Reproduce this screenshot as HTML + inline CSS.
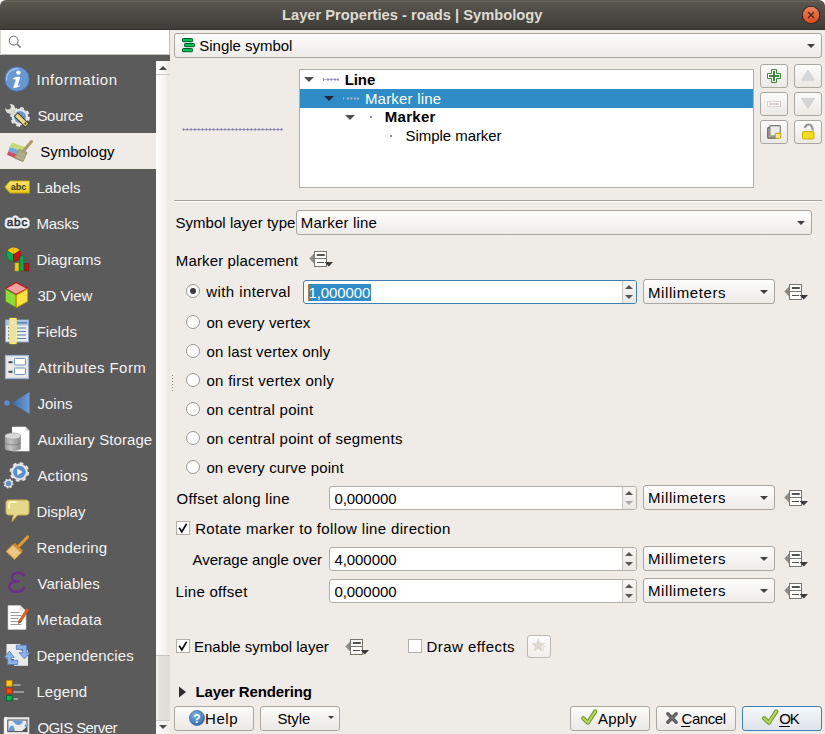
<!DOCTYPE html>
<html><head><meta charset="utf-8">
<style>
*{margin:0;padding:0;box-sizing:border-box}
html,body{width:825px;height:734px;overflow:hidden;background:#ffffff}
body{position:relative;font-family:"Liberation Sans",sans-serif;font-size:15px;color:#000}
.a{position:absolute}
.t{position:absolute;line-height:18px;white-space:nowrap;font-size:15px}
svg{position:absolute;overflow:visible}
#title{left:0;top:0;width:825px;height:30px;background:linear-gradient(#5b5850,#3d3c38);border-radius:6px 6px 0 0}
#bg{left:0;top:30px;width:825px;height:704px;background:#efebe7}
#search{left:0;top:30px;width:170px;height:25px;background:#fff;border-radius:2px 0 0 2px;border:1px solid #c4c0ba;border-top-color:#ffffff;border-left-color:#d6d3ce}
#side{left:0;top:55px;width:156px;height:679px;background:#5b5b5b}
#sidestrip{left:156px;top:55px;width:14px;height:6px;background:#5b5b5b}
#sel{left:0;top:133px;width:156px;height:36px;background:#efebe7}
.combo{position:absolute;border:1px solid #a9a59f;border-radius:3px;background:linear-gradient(#fdfdfd,#edebe8)}
.arr{position:absolute;width:0;height:0;border-left:4px solid transparent;border-right:4px solid transparent;border-top:4px solid #404040}
.spin{position:absolute;border:1px solid #b1ada7;border-radius:3px;background:#fff;overflow:hidden}
.spin .sb{position:absolute;right:0;top:0;bottom:0;width:14px;border-left:1px solid #c9c5c0;background:linear-gradient(#f7f6f4,#ebe8e4)}
.up{position:absolute;width:0;height:0;border-left:4px solid transparent;border-right:4px solid transparent;border-bottom:4px solid #555}
.dn{position:absolute;width:0;height:0;border-left:4px solid transparent;border-right:4px solid transparent;border-top:4px solid #555}
.tb{position:absolute;border:1px solid #aba7a1;border-radius:3px;background:linear-gradient(#fbfbfa,#ebe9e6)}
.radio{position:absolute;width:14px;height:14px;border-radius:50%;border:1px solid #9c9891;background:radial-gradient(circle at 50% 60%,#ffffff 55%,#f0efed)}
.chk{position:absolute;width:14px;height:14px;border:1px solid #b3afa9;background:#fff}
</style></head><body>
<div id="bg" class="a"></div>
<div id="title" class="a"></div>
<div class="a" style="left:4px;top:1px;width:817px;height:1px;background:#68655c"></div>
<div class="a" style="left:0;top:29px;width:825px;height:1px;background:#33322e"></div>
<svg style="left:801px;top:5px" width="20" height="20" viewBox="0 0 20 20">
 <defs><linearGradient id="cg" x1="0" y1="0" x2="0" y2="1"><stop offset="0" stop-color="#f0845a"/><stop offset="1" stop-color="#de4a18"/></linearGradient></defs>
 <circle cx="10" cy="10" r="9.3" fill="#2f2e2a"/>
 <circle cx="10" cy="10" r="8.2" fill="url(#cg)"/>
 <path d="M7 7L13 13M13 7L7 13" stroke="#3a2a20" stroke-width="1.3"/>
</svg>
<div id="search" class="a"></div>
<svg style="left:8px;top:35px" width="16" height="16" viewBox="0 0 16 16">
 <circle cx="5.7" cy="5.7" r="4.4" fill="none" stroke="#7b7b7b" stroke-width="1.1"/>
 <path d="M9 9L12.6 12.6" stroke="#7b7b7b" stroke-width="1.5"/>
</svg>
<div id="side" class="a"></div>
<div id="sidestrip" class="a"></div>
<!-- sidebar scrollbar -->
<div class="a" style="left:156px;top:61px;width:14px;height:594px;background:linear-gradient(90deg,#ffffff,#f6f5f3 60%,#eae7e3)"></div>
<div class="a" style="left:156px;top:74px;width:14px;height:1px;background:#cfcbc6"></div>
<div class="up" style="left:159px;top:66px;border-bottom-color:#4a4a4a"></div>
<div class="a" style="left:156px;top:655px;width:14px;height:65px;background:linear-gradient(90deg,#f3f1ee,#e2dfdb 30%,#e0ddd9)"></div>
<div class="a" style="left:156px;top:655px;width:14px;height:1px;background:#c9c5c0"></div>
<div class="a" style="left:156px;top:720px;width:14px;height:14px;background:linear-gradient(90deg,#ffffff,#f0eeeb)"></div>
<div class="a" style="left:156px;top:720px;width:14px;height:1px;background:#cfcbc6"></div>
<div class="dn" style="left:159px;top:725px;border-top-color:#4a4a4a"></div>
<div id="sel" class="a"></div>
<div class="a" style="left:172px;top:375px;width:1px;height:1px;background:#8a8885"></div><div class="a" style="left:172px;top:378px;width:1px;height:1px;background:#8a8885"></div><div class="a" style="left:172px;top:381px;width:1px;height:1px;background:#8a8885"></div><div class="a" style="left:172px;top:384px;width:1px;height:1px;background:#8a8885"></div><div class="a" style="left:172px;top:387px;width:1px;height:1px;background:#8a8885"></div><div class="a" style="left:172px;top:390px;width:1px;height:1px;background:#8a8885"></div>

<svg style="left:4px;top:66px" width="26" height="26" viewBox="0 0 26 26">
 <circle cx="13" cy="13" r="12.2" fill="#6898d3" stroke="#4470ac" stroke-width="0.8"/>
 <path d="M2.8 14.5A10.3 10.3 0 0 1 14.5 2.8" fill="none" stroke="#a9c7ee" stroke-width="1.1"/>
 <circle cx="14.4" cy="6.6" r="2.2" fill="#fff"/>
 <path d="M8.8 12.4C10.8 10.8 14.6 10.4 16.2 11C16.2 13 14.2 17 13.8 19.5C14.6 20 15.6 19.5 16.6 18.6C15.6 21 12.6 22.2 9.6 21.9C9.2 20.5 11.4 16 11.9 13.6C10.9 13.5 9.9 13.3 8.8 12.4Z" fill="#fff"/>
</svg>
<svg style="left:5px;top:102px" width="25" height="25" viewBox="0 0 25 25">
 <circle cx="15" cy="15" r="8.2" fill="#e8e8e8" stroke="#cfcfcf" stroke-width="0.5"/>
 <circle cx="15" cy="15" r="8.9" fill="none" stroke="#e8e8e8" stroke-width="2" stroke-dasharray="3.6 3.39"/>
 <circle cx="15" cy="15" r="6" fill="#6a9ad2"/>
 <circle cx="5.2" cy="6.8" r="4.9" fill="#e2e2dd"/>
 <circle cx="3" cy="4.6" r="2.9" fill="#5b5b5b"/>
 <path d="M7 8.6L11.5 13" stroke="#d6d6d0" stroke-width="3.6"/>
 <path d="M10.8 12.2L22.2 23.6" stroke="#35342a" stroke-width="5.8"/>
 <path d="M11.4 12.8L21.8 23.2" stroke="#eed77a" stroke-width="4"/>
 <circle cx="20.4" cy="21.6" r="1.1" fill="#3b3b30"/>
</svg>
<svg style="left:0px;top:133px" width="36" height="36" viewBox="0 0 36 36">
 <path d="M12 9.5L25 14L22.5 18.5L9.8 14Z" fill="#c3dc78"/>
 <path d="M9.8 14L22.5 18.5L20.5 22.5L8.2 18.2Z" fill="#6fa8dc"/>
 <path d="M8.2 18.2L20.5 22.5L21 28L7 21.8Z" fill="#d24f68"/>
 <path d="M19 16.5L27 19.5L23 28.5L14.5 25Z" fill="#aaa684" stroke="#948c5c" stroke-width="0.9"/>
 <path d="M16.5 20L25 23M15.5 23L23.5 26M21 17.5L18 26M24 18.5L21 27.5" stroke="#bdbaa0" stroke-width="0.5"/>
 <path d="M23.5 18L31.5 8.5" stroke="#a99b68" stroke-width="3" stroke-linecap="round"/>
</svg>
<svg style="left:4px;top:180px" width="26" height="14" viewBox="0 0 26 14">
 <defs><linearGradient id="lg" x1="0" y1="0" x2="0" y2="1"><stop offset="0" stop-color="#fbe870"/><stop offset="1" stop-color="#e9c80c"/></linearGradient></defs>
 <path d="M0.8 7L6 1H25.3V13H6Z" fill="url(#lg)" stroke="#c9a60a" stroke-width="0.9"/>
 <text x="6.8" y="10.2" font-family="Liberation Sans" font-weight="bold" font-size="9" fill="#3a3a2a">abc</text>
</svg>
<svg style="left:4px;top:213px" width="27" height="18" viewBox="0 0 27 18">
 <text x="2.7" y="12.7" font-family="Liberation Sans" font-size="11.6" letter-spacing="0.9" fill="none" stroke="#eef0f8" stroke-width="5" stroke-linejoin="round">abc</text>
 <text x="2.7" y="12.7" font-family="Liberation Sans" font-size="11.6" letter-spacing="0.9" fill="#2b2e33" stroke="#2b2e33" stroke-width="0.5">abc</text>
</svg>
<svg style="left:5px;top:246px" width="25" height="27" viewBox="0 0 25 27">
 <path d="M8.5 8.5L8.5 1.5A7 7 0 0 1 14.5 4.8Z" fill="#f7c900"/>
 <path d="M8.5 8.5L2.5 5A7 7 0 0 1 8.5 1.5Z" fill="#f7c900"/>
 <path d="M8.5 8.5L2.5 5A7 7 0 0 0 8.5 15.5Z" fill="#00b050" stroke="#0a6a30" stroke-width="0.6"/>
 <path d="M8.5 8.5L14.5 4.8A7 7 0 0 1 8.5 15.5Z" fill="#d01010" stroke="#7a1010" stroke-width="0.6"/>
 <rect x="10" y="17" width="3.8" height="8" fill="#f7c900" stroke="#c89a00" stroke-width="0.5"/>
 <rect x="15" y="10" width="3.8" height="15" fill="#00b050" stroke="#0a6a30" stroke-width="0.6"/>
 <rect x="19.8" y="17.5" width="4" height="7.5" fill="#cc1010" stroke="#7a1010" stroke-width="0.6"/>
</svg>
<svg style="left:4px;top:281px" width="26" height="28" viewBox="0 0 26 28">
 <path d="M12 1.5L23.5 7.5L12 13.5L1.5 7.5Z" fill="#f4a0a0" stroke="#c01818" stroke-width="1.2"/>
 <path d="M1.5 8L12 14V26.5L1.5 20.5Z" fill="#8ddc3a" stroke="#4e9a10" stroke-width="1"/>
 <path d="M23.5 8L12.5 14V26.5L23.5 20.5Z" fill="#ffe040" stroke="#c9a000" stroke-width="1"/>
</svg>
<svg style="left:5px;top:318px" width="25" height="27" viewBox="0 0 25 27">
 <rect x="0.5" y="2" width="23" height="22" fill="#e9edf2" stroke="#8aa6c8" stroke-width="1"/>
 <rect x="1" y="2.5" width="22" height="5" fill="#a8c2e2"/>
 <g fill="#5b82b6"><rect x="3" y="9" width="1.5" height="1.5"/><rect x="3" y="12.5" width="1.5" height="1.5"/><rect x="3" y="16" width="1.5" height="1.5"/><rect x="3" y="19.5" width="1.5" height="1.5"/>
 <rect x="12" y="4" width="10" height="1.5"/><rect x="12" y="9.5" width="9" height="1"/><rect x="12" y="13" width="9" height="1"/><rect x="12" y="16.5" width="9" height="1"/><rect x="12" y="20" width="9" height="1"/></g>
 <rect x="5" y="0.5" width="6" height="25" fill="#ece0b2" stroke="#f8f050" stroke-width="1.3"/>
 <rect x="7.2" y="4" width="1.5" height="1.5" fill="#fff"/>
</svg>
<svg style="left:5px;top:355px" width="25" height="24" viewBox="0 0 25 24">
 <rect x="0.5" y="0.5" width="23" height="23" fill="#e8e8e6" stroke="#9ab3d3" stroke-width="1.2"/>
 <rect x="3.5" y="6.2" width="4" height="2" fill="#3c4a58"/>
 <rect x="3.5" y="15.8" width="4" height="2" fill="#3c4a58"/>
 <rect x="9.5" y="3.5" width="11" height="6.5" rx="1" fill="#fff" stroke="#6f94c4" stroke-width="1"/>
 <rect x="9.5" y="13" width="11" height="6.5" rx="1" fill="#fff" stroke="#6f94c4" stroke-width="1"/>
</svg>
<svg style="left:3px;top:391px" width="27" height="24" viewBox="0 0 27 24">
 <defs><linearGradient id="jg" x1="0" y1="0" x2="1" y2="0"><stop offset="0" stop-color="#3a6aa6"/><stop offset="1" stop-color="#6f9cd6"/></linearGradient></defs>
 <circle cx="4" cy="12" r="2.8" fill="#5a8ac8"/>
 <path d="M9 12L26.5 1V23Z" fill="url(#jg)"/>
</svg>
<svg style="left:4px;top:426px" width="26" height="27" viewBox="0 0 26 27">
 <path d="M8 0.8H21.5L25.4 4.8V25.2H8Z" fill="#fff"/>
 <path d="M21.5 0.8V4.8H25.4Z" fill="#d5d5d5"/>
 <defs><linearGradient id="dbg" x1="0" y1="0" x2="1" y2="0"><stop offset="0" stop-color="#9a9a9a"/><stop offset="0.35" stop-color="#c2c2c2"/><stop offset="1" stop-color="#8a8a8a"/></linearGradient></defs>
 <path d="M0.8 10V22.5C0.8 25.8 16.8 25.8 16.8 22.5V10Z" fill="url(#dbg)"/>
 <ellipse cx="8.8" cy="10" rx="8" ry="3.1" fill="#d8d8d8" stroke="#8a8a8a" stroke-width="0.5"/>
 <path d="M0.8 16.5C0.8 19.6 16.8 19.6 16.8 16.5" fill="none" stroke="#7a7a7a" stroke-width="0.7"/>
</svg>
<svg style="left:3px;top:460px" width="28" height="30" viewBox="0 0 28 30">
 <circle cx="16.4" cy="12" r="8.3" fill="#e8e8e8" stroke="#c8c8c8" stroke-width="0.5"/>
 <circle cx="16.4" cy="12" r="8.9" fill="none" stroke="#e8e8e8" stroke-width="1.8" stroke-dasharray="3.6 3.39"/>
 <circle cx="16.4" cy="12" r="6" fill="#5e8fcc" stroke="#4a78b4" stroke-width="0.5"/>
 <path d="M14.4 8.8V15.2L19.6 12Z" fill="#fff"/>
 <circle cx="5.5" cy="23.5" r="4" fill="#e8e8e8"/>
 <circle cx="5.5" cy="23.5" r="4.4" fill="none" stroke="#e8e8e8" stroke-width="1.2" stroke-dasharray="1.7 1.75"/>
 <circle cx="5.5" cy="23.5" r="2.7" fill="#5e8fcc"/>
</svg>
<svg style="left:5px;top:499px" width="25" height="24" viewBox="0 0 25 24">
 <path d="M4 1H21C23 1 24 2 24 4V13C24 15 23 16 21 16H12.5L7 22.5L8.5 16H4C2 16 1 15 1 13V4C1 2 2 1 4 1Z" fill="#e4d98a" stroke="#c9b24a" stroke-width="1"/>
 <path d="M4 9V5C4 3.5 5 3 7 3H11" fill="none" stroke="#fffbe6" stroke-width="1.5" stroke-linecap="round"/>
</svg>
<svg style="left:5px;top:535px" width="24" height="26" viewBox="0 0 24 26">
 <path d="M13.5 11.5L22.6 2" stroke="#dc9a32" stroke-width="3.2" stroke-linecap="round"/>
 <path d="M1 16.5L8 9.5L16.5 17.5L9.5 24.5Z" fill="#ebc27c" stroke="#cf8d2c" stroke-width="1"/>
 <path d="M8 9.5L10 8L18 15.5L16.5 17.5Z" fill="#d48a26"/>
 <path d="M3.5 14L12 22M6 11.5L14.5 19.5M5 18.5L11 12.5M7.5 21L13.5 15" stroke="#f4d9a6" stroke-width="0.5"/>
</svg>
<svg style="left:7px;top:570px" width="20" height="24" viewBox="0 0 20 24">
 <path d="M16.5 5.2C15.5 3 13.5 2.6 11.5 2.6C7.5 2.6 4.8 4.8 4.8 7.3C4.8 9.5 7 11.2 10 11.3C6 11.5 2.3 13.5 2.3 16.7C2.3 19.8 5.3 21.8 9.5 21.8C13 21.8 15.5 20.5 16.8 18" fill="none" stroke="#6a2f8a" stroke-width="2.6" stroke-linecap="round"/>
 <path d="M9 11.3H13" stroke="#6a2f8a" stroke-width="2"/>
</svg>
<svg style="left:6px;top:605px" width="24" height="26" viewBox="0 0 24 26">
 <path d="M2 0.5H14L20 6V24.5H2Z" fill="#fff" stroke="#cfcfcf" stroke-width="0.6"/>
 <path d="M14 0.5V6H20Z" fill="#e3e3e3"/>
 <g fill="#9a9a9a"><rect x="4.5" y="7" width="9" height="1"/><rect x="4.5" y="10" width="11" height="1"/><rect x="4.5" y="13" width="8" height="1"/><rect x="4.5" y="16" width="11" height="1"/><rect x="4.5" y="19" width="11" height="1"/></g>
 <path d="M21 3L23 4.8L15 17L12.5 18.5L13 15.5Z" fill="#e8601a" stroke="#a84510" stroke-width="0.5"/>
 <path d="M13 15.5L12.5 18.5L15 17Z" fill="#555"/>
</svg>
<svg style="left:0px;top:640px" width="32" height="30" viewBox="0 0 32 30">
 <rect x="6.5" y="4" width="14" height="15" fill="#ededeb"/>
 <rect x="14" y="10.5" width="14" height="15.3" fill="#e9e9e7"/>
 <path d="M16.4 5.2H26.6V12.7H30.1L24.5 18.8L19 12.7H22.6V9.4H16.4Z" fill="#8ab2e8" stroke="#4f7cc0" stroke-width="0.8"/>
 <path d="M17.7 24.5H7.6V17.5H4.1L9.4 11.1L14.3 17.5H11.3V20.3H17.7Z" fill="#8ab2e8" stroke="#4f7cc0" stroke-width="0.8"/>
</svg>
<svg style="left:5px;top:679px" width="20" height="24" viewBox="0 0 20 24">
 <rect x="1.6" y="1.7" width="5.4" height="5.4" fill="#ffd000" stroke="#e09000" stroke-width="0.8"/>
 <rect x="1.6" y="9.2" width="5.4" height="5.4" fill="#ff4a00" stroke="#c03000" stroke-width="0.8"/>
 <rect x="1.6" y="16.4" width="5.4" height="5.4" fill="#00c050" stroke="#006028" stroke-width="0.8"/>
 <rect x="8.5" y="5.2" width="7" height="1.6" fill="#a8a8a8"/>
 <rect x="8.5" y="12.2" width="10.5" height="1.6" fill="#a8a8a8"/>
 <rect x="8.5" y="19.2" width="4.5" height="1.6" fill="#a8a8a8"/>
</svg>
<svg style="left:4px;top:716px" width="26" height="20" viewBox="0 0 26 20">
 <rect x="0.5" y="1.5" width="24.5" height="18" fill="#ebebeb" stroke="#dadada" stroke-width="0.6"/>
 <rect x="0" y="1" width="4" height="19" rx="2" fill="#f7f7f7" stroke="#d0d0d0" stroke-width="0.5"/>
 <rect x="3.8" y="4" width="19.2" height="11.6" fill="#ececec" stroke="#4e4e4e" stroke-width="1"/>
 <path d="M8 4.5H19C18.5 7 17 9 14 9C11 9 10 6 8 4.5Z" fill="#6a9ad8"/>
 <path d="M4.3 15.1C5 12 6 9.5 8 9.5C10 9.5 10.5 13 11 15.1Z" fill="#6a9ad8"/>
 <path d="M20.5 10.5C20.5 8.8 21.5 8 22.6 8V11.5Z" fill="#6a9ad8"/>
 <path d="M17.5 15.6L23 10.5V15.6Z" fill="#555"/>
</svg>


<!-- content -->
<div class="combo" style="left:174px;top:33px;width:648px;height:25px"></div>
<svg style="left:181px;top:37px" width="16" height="16" viewBox="0 0 16 16">
 <rect x="1.5" y="1.5" width="10" height="3.2" rx="0.8" fill="#00c352" stroke="#005a2a" stroke-width="1"/>
 <rect x="3.5" y="6.5" width="10" height="3.2" rx="0.8" fill="#00c352" stroke="#005a2a" stroke-width="1"/>
 <rect x="1.5" y="11.5" width="10" height="3.2" rx="0.8" fill="#00c352" stroke="#005a2a" stroke-width="1"/>
</svg>
<div class="arr" style="left:807px;top:44px"></div>

<!-- preview line -->
<svg style="left:182px;top:126px" width="104" height="7" viewBox="0 0 104 7">
 <line x1="1.6" y1="3.5" x2="101" y2="3.5" stroke="#a4a2c6" stroke-width="1"/>
 <g fill="#8a88b4" id="dots"><path d="M0.10 3.5L1.60 2L3.10 3.5L1.60 5Z"/><path d="M3.87 3.5L5.37 2L6.87 3.5L5.37 5Z"/><path d="M7.64 3.5L9.14 2L10.64 3.5L9.14 5Z"/><path d="M11.41 3.5L12.91 2L14.41 3.5L12.91 5Z"/><path d="M15.18 3.5L16.68 2L18.18 3.5L16.68 5Z"/><path d="M18.95 3.5L20.45 2L21.95 3.5L20.45 5Z"/><path d="M22.72 3.5L24.22 2L25.72 3.5L24.22 5Z"/><path d="M26.49 3.5L27.99 2L29.49 3.5L27.99 5Z"/><path d="M30.26 3.5L31.76 2L33.26 3.5L31.76 5Z"/><path d="M34.03 3.5L35.53 2L37.03 3.5L35.53 5Z"/><path d="M37.80 3.5L39.30 2L40.80 3.5L39.30 5Z"/><path d="M41.57 3.5L43.07 2L44.57 3.5L43.07 5Z"/><path d="M45.34 3.5L46.84 2L48.34 3.5L46.84 5Z"/><path d="M49.11 3.5L50.61 2L52.11 3.5L50.61 5Z"/><path d="M52.88 3.5L54.38 2L55.88 3.5L54.38 5Z"/><path d="M56.65 3.5L58.15 2L59.65 3.5L58.15 5Z"/><path d="M60.42 3.5L61.92 2L63.42 3.5L61.92 5Z"/><path d="M64.19 3.5L65.69 2L67.19 3.5L65.69 5Z"/><path d="M67.96 3.5L69.46 2L70.96 3.5L69.46 5Z"/><path d="M71.73 3.5L73.23 2L74.73 3.5L73.23 5Z"/><path d="M75.50 3.5L77.00 2L78.50 3.5L77.00 5Z"/><path d="M79.27 3.5L80.77 2L82.27 3.5L80.77 5Z"/><path d="M83.04 3.5L84.54 2L86.04 3.5L84.54 5Z"/><path d="M86.81 3.5L88.31 2L89.81 3.5L88.31 5Z"/><path d="M90.58 3.5L92.08 2L93.58 3.5L92.08 5Z"/><path d="M94.35 3.5L95.85 2L97.35 3.5L95.85 5Z"/><path d="M98.12 3.5L99.62 2L101.12 3.5L99.62 5Z"/></g>
</svg>

<div class="a" style="left:299px;top:69px;width:455px;height:119px;background:#fff;border:1px solid #b1ada7"></div>
<div class="a" style="left:300px;top:89px;width:453px;height:19px;background:#308cc6"></div>
<div class="dn" style="left:304px;top:77px;border-left-width:5px;border-right-width:5px;border-top-width:5px;border-top-color:#505050"></div>
<div class="dn" style="left:324px;top:96px;border-left-width:5px;border-right-width:5px;border-top-width:5px;border-top-color:#1b2a35"></div>
<div class="dn" style="left:345px;top:115px;border-left-width:5px;border-right-width:5px;border-top-width:5px;border-top-color:#505050"></div>
<svg style="left:322px;top:76px" width="40" height="8" viewBox="0 0 40 8">
 <line x1="1" y1="3.5" x2="17" y2="3.5" stroke="#b3b1cf" stroke-width="1"/>
 <g fill="#8d8bb5"><rect x="1" y="2" width="1" height="3"/><rect x="5" y="2.5" width="2" height="2"/><rect x="8.5" y="2.5" width="2" height="2"/><rect x="12" y="2.5" width="2" height="2"/><rect x="15" y="2.5" width="2" height="2"/></g>
</svg>
<svg style="left:342px;top:95px" width="40" height="8" viewBox="0 0 40 8">
 <g fill="#a6b9d2"><rect x="1" y="2.5" width="1" height="2"/><rect x="5" y="2.5" width="2" height="2"/><rect x="8.5" y="2.5" width="2" height="2"/><rect x="12" y="2.5" width="2" height="2"/><rect x="15" y="2.5" width="2" height="2"/></g>
</svg>
<div class="a" style="left:370px;top:116px;width:2px;height:2px;background:#8d8bb5"></div>
<div class="a" style="left:390px;top:135px;width:2px;height:2px;background:#8d8bb5"></div>

<div class="tb" style="left:760px;top:64px;width:28px;height:24px"></div>
<div class="tb" style="left:794px;top:64px;width:28px;height:24px"></div>
<div class="tb" style="left:760px;top:92px;width:28px;height:24px"></div>
<div class="tb" style="left:794px;top:92px;width:28px;height:24px"></div>
<div class="tb" style="left:760px;top:120px;width:28px;height:24px"></div>
<div class="tb" style="left:794px;top:120px;width:28px;height:24px"></div>
<!-- plus -->
<svg style="left:762px;top:64px" width="24" height="24" viewBox="0 0 24 24">
 <path d="M9.5 5.5H14.5V9.5H18.5V14.5H14.5V18.5H9.5V14.5H5.5V9.5H9.5Z" fill="#fff" stroke="#3d8a3d" stroke-width="1"/>
 <rect x="11" y="7" width="2" height="10" fill="#3d8a3d"/><rect x="7" y="11" width="10" height="2" fill="#3d8a3d"/>
</svg>
<!-- minus disabled -->
<svg style="left:762px;top:92px" width="24" height="24" viewBox="0 0 24 24">
 <rect x="5.5" y="9.5" width="13" height="5" fill="#fff" stroke="#ddd0d0" stroke-width="1"/>
 <rect x="7" y="11" width="10" height="2" fill="#ddd0d0"/>
</svg>
<!-- up/down disabled -->
<svg style="left:796px;top:64px" width="24" height="24" viewBox="0 0 24 24">
 <path d="M12 6L18.8 16.6H5.2Z" fill="#d5d6d7" stroke="#cdcecf" stroke-width="0.6"/>
</svg>
<svg style="left:796px;top:92px" width="24" height="24" viewBox="0 0 24 24">
 <path d="M5.2 6.3H18.8L12 16.6Z" fill="#d5d6d7" stroke="#cdcecf" stroke-width="0.6"/>
</svg>
<!-- duplicate -->
<svg style="left:762px;top:120px" width="24" height="24" viewBox="0 0 24 24">
 <rect x="5.8" y="7.6" width="10" height="10.6" rx="0.8" fill="#b9b9ad" stroke="#5b5b56" stroke-width="1.2"/>
 <rect x="7.9" y="5.6" width="10.4" height="10.4" rx="0.8" fill="#ececea" stroke="#7a7a76" stroke-width="1.1"/>
 <rect x="13.4" y="13.4" width="5.2" height="4.9" rx="0.8" fill="#f3e7a0" stroke="#d2a800" stroke-width="1.1"/>
</svg>
<!-- lock open -->
<svg style="left:796px;top:120px" width="24" height="24" viewBox="0 0 24 24">
 <path d="M8.8 8C9.5 5.5 11 4.5 12.8 4.5C15 4.5 16.5 6.5 16.8 10.5" fill="none" stroke="#8a8a8a" stroke-width="2.2"/>
 <path d="M8.8 8C9.5 5.5 11 4.5 12.8 4.5C15 4.5 16.5 6.5 16.8 10.5" fill="none" stroke="#d8d8d8" stroke-width="0.7" stroke-dasharray="1 1"/>
 <rect x="6.5" y="11.5" width="11.5" height="7.5" rx="1.3" fill="#f2dd1c" stroke="#cfae00" stroke-width="1"/>
</svg>

<div class="a" style="left:174px;top:200px;width:648px;height:1px;background:#a5a19b"></div>
<div class="a" style="left:174px;top:201px;width:648px;height:1px;background:#fdfdfc"></div>

<div class="combo" style="left:296px;top:210px;width:516px;height:25px"></div>
<div class="arr" style="left:797px;top:221px"></div>

<svg style="left:309px;top:251px" width="25" height="17" viewBox="0 0 25 17">
 <path d="M0.3 7.5L5.5 2V13Z" fill="#8b8b87"/>
 <rect x="5.5" y="0.5" width="12" height="15" fill="#fff" stroke="#777772" stroke-width="1"/>
 <line x1="5.5" y1="7.5" x2="17.5" y2="7.5" stroke="#777772" stroke-width="1"/>
 <rect x="7.8" y="3" width="8" height="2" fill="#55554f"/>
 <line x1="8" y1="11.5" x2="15" y2="11.5" stroke="#55554f" stroke-width="1"/>
 <path d="M15.5 11H24L19.75 15.5Z" fill="#3a3a3a"/>
</svg>
<svg style="left:784px;top:284px" width="25" height="17" viewBox="0 0 25 17">
 <path d="M0.3 7.5L5.5 2V13Z" fill="#8b8b87"/>
 <rect x="5.5" y="0.5" width="12" height="15" fill="#fff" stroke="#777772" stroke-width="1"/>
 <line x1="5.5" y1="7.5" x2="17.5" y2="7.5" stroke="#777772" stroke-width="1"/>
 <rect x="7.8" y="3" width="8" height="2" fill="#55554f"/>
 <line x1="8" y1="11.5" x2="15" y2="11.5" stroke="#55554f" stroke-width="1"/>
 <path d="M15.5 11H24L19.75 15.5Z" fill="#3a3a3a"/>
</svg>
<svg style="left:784px;top:490px" width="25" height="17" viewBox="0 0 25 17">
 <path d="M0.3 7.5L5.5 2V13Z" fill="#8b8b87"/>
 <rect x="5.5" y="0.5" width="12" height="15" fill="#fff" stroke="#777772" stroke-width="1"/>
 <line x1="5.5" y1="7.5" x2="17.5" y2="7.5" stroke="#777772" stroke-width="1"/>
 <rect x="7.8" y="3" width="8" height="2" fill="#55554f"/>
 <line x1="8" y1="11.5" x2="15" y2="11.5" stroke="#55554f" stroke-width="1"/>
 <path d="M15.5 11H24L19.75 15.5Z" fill="#3a3a3a"/>
</svg>
<svg style="left:784px;top:551px" width="25" height="17" viewBox="0 0 25 17">
 <path d="M0.3 7.5L5.5 2V13Z" fill="#8b8b87"/>
 <rect x="5.5" y="0.5" width="12" height="15" fill="#fff" stroke="#777772" stroke-width="1"/>
 <line x1="5.5" y1="7.5" x2="17.5" y2="7.5" stroke="#777772" stroke-width="1"/>
 <rect x="7.8" y="3" width="8" height="2" fill="#55554f"/>
 <line x1="8" y1="11.5" x2="15" y2="11.5" stroke="#55554f" stroke-width="1"/>
 <path d="M15.5 11H24L19.75 15.5Z" fill="#3a3a3a"/>
</svg>
<svg style="left:784px;top:583px" width="25" height="17" viewBox="0 0 25 17">
 <path d="M0.3 7.5L5.5 2V13Z" fill="#8b8b87"/>
 <rect x="5.5" y="0.5" width="12" height="15" fill="#fff" stroke="#777772" stroke-width="1"/>
 <line x1="5.5" y1="7.5" x2="17.5" y2="7.5" stroke="#777772" stroke-width="1"/>
 <rect x="7.8" y="3" width="8" height="2" fill="#55554f"/>
 <line x1="8" y1="11.5" x2="15" y2="11.5" stroke="#55554f" stroke-width="1"/>
 <path d="M15.5 11H24L19.75 15.5Z" fill="#3a3a3a"/>
</svg>
<svg style="left:345px;top:639px" width="25" height="17" viewBox="0 0 25 17">
 <path d="M0.3 7.5L5.5 2V13Z" fill="#8b8b87"/>
 <rect x="5.5" y="0.5" width="12" height="15" fill="#fff" stroke="#777772" stroke-width="1"/>
 <line x1="5.5" y1="7.5" x2="17.5" y2="7.5" stroke="#777772" stroke-width="1"/>
 <rect x="7.8" y="3" width="8" height="2" fill="#55554f"/>
 <line x1="8" y1="11.5" x2="15" y2="11.5" stroke="#55554f" stroke-width="1"/>
 <path d="M15.5 11H24L19.75 15.5Z" fill="#3a3a3a"/>
</svg>

<div class="radio" style="left:186px;top:284px"></div>
<div class="a" style="left:190px;top:288px;width:6px;height:6px;border-radius:50%;background:#3a3a3a"></div>
<div class="radio" style="left:186px;top:315px"></div>
<div class="radio" style="left:186px;top:344px"></div>
<div class="radio" style="left:186px;top:373px"></div>
<div class="radio" style="left:186px;top:402px"></div>
<div class="radio" style="left:186px;top:431px"></div>
<div class="radio" style="left:186px;top:460px"></div>

<div class="spin" style="left:303px;top:280px;width:334px;height:24px;border-color:#3d7fb3"><div class="sb"></div></div>
<div class="up" style="left:625px;top:285px"></div>
<div class="dn" style="left:625px;top:295px"></div>
<div class="a" style="left:308px;top:284px;width:63px;height:17px;background:#308cc6"></div>
<div class="a" style="left:308px;top:284px;width:1px;height:17px;background:#d0702a"></div>
<div class="combo" style="left:643px;top:279px;width:132px;height:25px"></div>
<div class="arr" style="left:760px;top:290px"></div>

<div class="spin" style="left:329px;top:486px;width:308px;height:24px"><div class="sb"></div></div>
<div class="up" style="left:625px;top:491px"></div>
<div class="dn" style="left:625px;top:501px;border-top-color:#a9a9a9"></div>
<div class="combo" style="left:643px;top:485px;width:132px;height:25px"></div>
<div class="arr" style="left:760px;top:496px"></div>

<div class="chk" style="left:176px;top:521px"></div>
<svg style="left:176px;top:521px" width="14" height="14" viewBox="0 0 14 14"><path d="M3.2 6.8L5.8 10.8L10.6 2.8" fill="none" stroke="#111" stroke-width="1.7"/></svg>

<div class="spin" style="left:329px;top:547px;width:308px;height:24px"><div class="sb"></div></div>
<div class="up" style="left:625px;top:552px"></div>
<div class="dn" style="left:625px;top:562px"></div>
<div class="combo" style="left:643px;top:546px;width:132px;height:25px"></div>
<div class="arr" style="left:760px;top:557px"></div>

<div class="spin" style="left:329px;top:579px;width:308px;height:24px"><div class="sb"></div></div>
<div class="up" style="left:625px;top:584px"></div>
<div class="dn" style="left:625px;top:594px"></div>
<div class="combo" style="left:643px;top:578px;width:132px;height:25px"></div>
<div class="arr" style="left:760px;top:589px"></div>

<div class="chk" style="left:176px;top:639px"></div>
<svg style="left:176px;top:639px" width="14" height="14" viewBox="0 0 14 14"><path d="M3.2 6.8L5.8 10.8L10.6 2.8" fill="none" stroke="#111" stroke-width="1.7"/></svg>
<div class="chk" style="left:408px;top:639px"></div>
<div class="tb" style="left:527px;top:635px;width:24px;height:23px;background:linear-gradient(#fcfcfc,#f0eeeb);border-color:#bcb8b3"></div>
<svg style="left:531px;top:638px" width="16" height="16" viewBox="0 0 16 16"><path d="M7.30 1.00L9.00 5.25L13.58 5.56L10.06 8.50L11.18 12.94L7.30 10.50L3.42 12.94L4.54 8.50L1.02 5.56L5.60 5.25Z" fill="#dcd9cf" stroke="#d3d0c5" stroke-width="0.5"/><path d="M12.5 12.5V8.5H14" fill="none" stroke="#d8d5cf" stroke-width="0.8"/></svg>

<svg style="left:178px;top:686px" width="10" height="12" viewBox="0 0 10 12"><path d="M1 0.5L8 6L1 11.5Z" fill="#2f2f2f"/></svg>

<div class="tb" style="left:174px;top:706px;width:80px;height:25px"></div>
<svg style="left:189px;top:710px" width="16" height="16" viewBox="0 0 16 16">
 <defs><radialGradient id="hg" cx="0.4" cy="0.3" r="0.8"><stop offset="0" stop-color="#7fb2e5"/><stop offset="1" stop-color="#2c65a8"/></radialGradient></defs>
 <circle cx="8" cy="8" r="7.6" fill="url(#hg)" stroke="#2a5b95" stroke-width="0.6"/>
 <text x="8" y="12.6" font-family="Liberation Sans" font-weight="bold" font-size="12" fill="#fff" text-anchor="middle">?</text>
</svg>
<div class="tb" style="left:260px;top:706px;width:80px;height:25px"></div>
<div class="arr" style="left:328px;top:716px;border-left-width:3px;border-right-width:3px;border-top-width:3px"></div>
<div class="tb" style="left:570px;top:706px;width:80px;height:25px"></div>
<svg style="left:580px;top:708px" width="18" height="18" viewBox="0 0 18 18"><path d="M3.2 10.2L7.8 14.8L15.2 3.5" fill="none" stroke="#6f9a2a" stroke-width="4.2" stroke-linejoin="round" stroke-linecap="round"/><path d="M3.2 10.2L7.8 14.8L15.2 3.5" fill="none" stroke="#b5d65a" stroke-width="2.2" stroke-linejoin="round" stroke-linecap="round"/></svg>
<div class="tb" style="left:656px;top:706px;width:80px;height:25px"></div>
<svg style="left:665px;top:711px" width="14" height="14" viewBox="0 0 14 14"><path d="M2.8 2.8L11.2 11.2M11.2 2.8L2.8 11.2" stroke="#5b5b5b" stroke-width="3.4" stroke-linecap="round"/><path d="M3 3L11 11M11 3L3 11" stroke="#7a7a7a" stroke-width="1" stroke-linecap="round"/></svg>
<div class="a" style="left:681px;top:726px;width:9px;height:1px;background:#000"></div>
<div class="tb" style="left:742px;top:706px;width:80px;height:25px;border-color:#3f82ba;background:linear-gradient(#f6f8fa,#dde4ea)"></div>
<svg style="left:761px;top:708px" width="18" height="18" viewBox="0 0 18 18"><path d="M3.2 10.2L7.8 14.8L15.2 3.5" fill="none" stroke="#6f9a2a" stroke-width="4.2" stroke-linejoin="round" stroke-linecap="round"/><path d="M3.2 10.2L7.8 14.8L15.2 3.5" fill="none" stroke="#b5d65a" stroke-width="2.2" stroke-linejoin="round" stroke-linecap="round"/></svg>
<div class="a" style="left:779px;top:726px;width:11px;height:1px;background:#000"></div>

<div class="t" style="left:282.0px;top:6.0px;font-weight:bold;font-size:14.7px;color:#dfdbd2">Layer Properties - roads | Symbology</div>
<div class="t" style="left:36.4px;top:71.0px;letter-spacing:0.57px;color:#f2f2f2">Information</div>
<div class="t" style="left:37.4px;top:107.0px;letter-spacing:-0.30px;color:#f2f2f2">Source</div>
<div class="t" style="left:40.2px;top:143.0px;letter-spacing:0.02px">Symbology</div>
<div class="t" style="left:36.4px;top:179.0px;color:#f2f2f2">Labels</div>
<div class="t" style="left:36.4px;top:215.0px;letter-spacing:-0.18px;color:#f2f2f2">Masks</div>
<div class="t" style="left:36.4px;top:251.0px;letter-spacing:0.07px;color:#f2f2f2">Diagrams</div>
<div class="t" style="left:37.4px;top:287.0px;letter-spacing:-0.11px;color:#f2f2f2">3D View</div>
<div class="t" style="left:36.4px;top:323.0px;letter-spacing:0.12px;color:#f2f2f2">Fields</div>
<div class="t" style="left:37.4px;top:359.0px;letter-spacing:0.42px;color:#f2f2f2">Attributes Form</div>
<div class="t" style="left:37.4px;top:395.0px;letter-spacing:0.05px;color:#f2f2f2">Joins</div>
<div class="t" style="left:37.4px;top:431.0px;letter-spacing:0.09px;color:#f2f2f2">Auxiliary Storage</div>
<div class="t" style="left:37.4px;top:467.0px;letter-spacing:0.20px;color:#f2f2f2">Actions</div>
<div class="t" style="left:36.4px;top:503.0px;letter-spacing:-0.03px;color:#f2f2f2">Display</div>
<div class="t" style="left:36.4px;top:539.0px;letter-spacing:0.20px;color:#f2f2f2">Rendering</div>
<div class="t" style="left:37.4px;top:575.0px;letter-spacing:0.12px;color:#f2f2f2">Variables</div>
<div class="t" style="left:36.4px;top:611.0px;letter-spacing:0.37px;color:#f2f2f2">Metadata</div>
<div class="t" style="left:36.4px;top:647.0px;letter-spacing:0.13px;color:#f2f2f2">Dependencies</div>
<div class="t" style="left:36.4px;top:683.0px;letter-spacing:0.12px;color:#f2f2f2">Legend</div>
<div class="t" style="left:37.4px;top:719.0px;letter-spacing:-0.58px;color:#f2f2f2">QGIS Server</div>
<div class="t" style="left:199.3px;top:37.0px;letter-spacing:-0.02px">Single symbol</div>
<div class="t" style="left:344.8px;top:71.0px;letter-spacing:-0.13px;font-weight:bold">Line</div>
<div class="t" style="left:364.9px;top:89.5px;letter-spacing:0.20px;color:#fff">Marker line</div>
<div class="t" style="left:384.8px;top:108.3px;letter-spacing:0.27px;font-weight:bold">Marker</div>
<div class="t" style="left:405.6px;top:127.2px;letter-spacing:-0.06px">Simple marker</div>
<div class="t" style="left:175.4px;top:214.0px;letter-spacing:0.05px">Symbol layer type</div>
<div class="t" style="left:300.8px;top:214.0px;letter-spacing:0.19px">Marker line</div>
<div class="t" style="left:175.8px;top:252.2px;letter-spacing:0.14px">Marker placement</div>
<div class="t" style="left:206.2px;top:283.0px;letter-spacing:0.42px">with interval</div>
<div class="t" style="left:206.4px;top:314.0px;letter-spacing:0.10px">on every vertex</div>
<div class="t" style="left:206.4px;top:343.0px;letter-spacing:0.17px">on last vertex only</div>
<div class="t" style="left:206.4px;top:372.0px;letter-spacing:0.30px">on first vertex only</div>
<div class="t" style="left:206.4px;top:401.0px;letter-spacing:0.28px">on central point</div>
<div class="t" style="left:206.4px;top:430.0px;letter-spacing:0.28px">on central point of segments</div>
<div class="t" style="left:206.4px;top:459.0px;letter-spacing:0.12px">on every curve point</div>
<div class="t" style="left:308.6px;top:284.0px;letter-spacing:-0.12px;color:#fff">1,000000</div>
<div class="t" style="left:648.0px;top:284.0px;letter-spacing:0.59px">Millimeters</div>
<div class="t" style="left:648.0px;top:489.0px;letter-spacing:0.59px">Millimeters</div>
<div class="t" style="left:648.0px;top:550.0px;letter-spacing:0.59px">Millimeters</div>
<div class="t" style="left:648.0px;top:582.0px;letter-spacing:0.59px">Millimeters</div>
<div class="t" style="left:176.5px;top:490.0px;letter-spacing:0.31px">Offset along line</div>
<div class="t" style="left:334.4px;top:490.0px;letter-spacing:-0.06px">0,000000</div>
<div class="t" style="left:195.2px;top:520.0px;letter-spacing:0.34px">Rotate marker to follow line direction</div>
<div class="t" style="left:192.5px;top:551.0px;letter-spacing:-0.02px">Average angle over</div>
<div class="t" style="left:334.4px;top:551.0px;letter-spacing:-0.06px">4,000000</div>
<div class="t" style="left:175.5px;top:583.0px;letter-spacing:0.29px">Line offset</div>
<div class="t" style="left:334.4px;top:583.0px;letter-spacing:-0.06px">0,000000</div>
<div class="t" style="left:194.0px;top:638.0px;letter-spacing:-0.02px">Enable symbol layer</div>
<div class="t" style="left:426.6px;top:638.0px;letter-spacing:0.44px">Draw effects</div>
<div class="t" style="left:195.4px;top:682.5px;letter-spacing:-0.13px;font-weight:bold">Layer Rendering</div>
<div class="t" style="left:205.0px;top:710.0px;letter-spacing:0.56px">Help</div>
<div class="t" style="left:277.4px;top:710.0px;letter-spacing:-0.10px">Style</div>
<div class="t" style="left:598.0px;top:710.0px;letter-spacing:0.22px">Apply</div>
<div class="t" style="left:681.6px;top:710.0px;letter-spacing:-0.45px">Cancel</div>
<div class="t" style="left:779.3px;top:710.0px;letter-spacing:-1.17px">OK</div>

</body></html>
